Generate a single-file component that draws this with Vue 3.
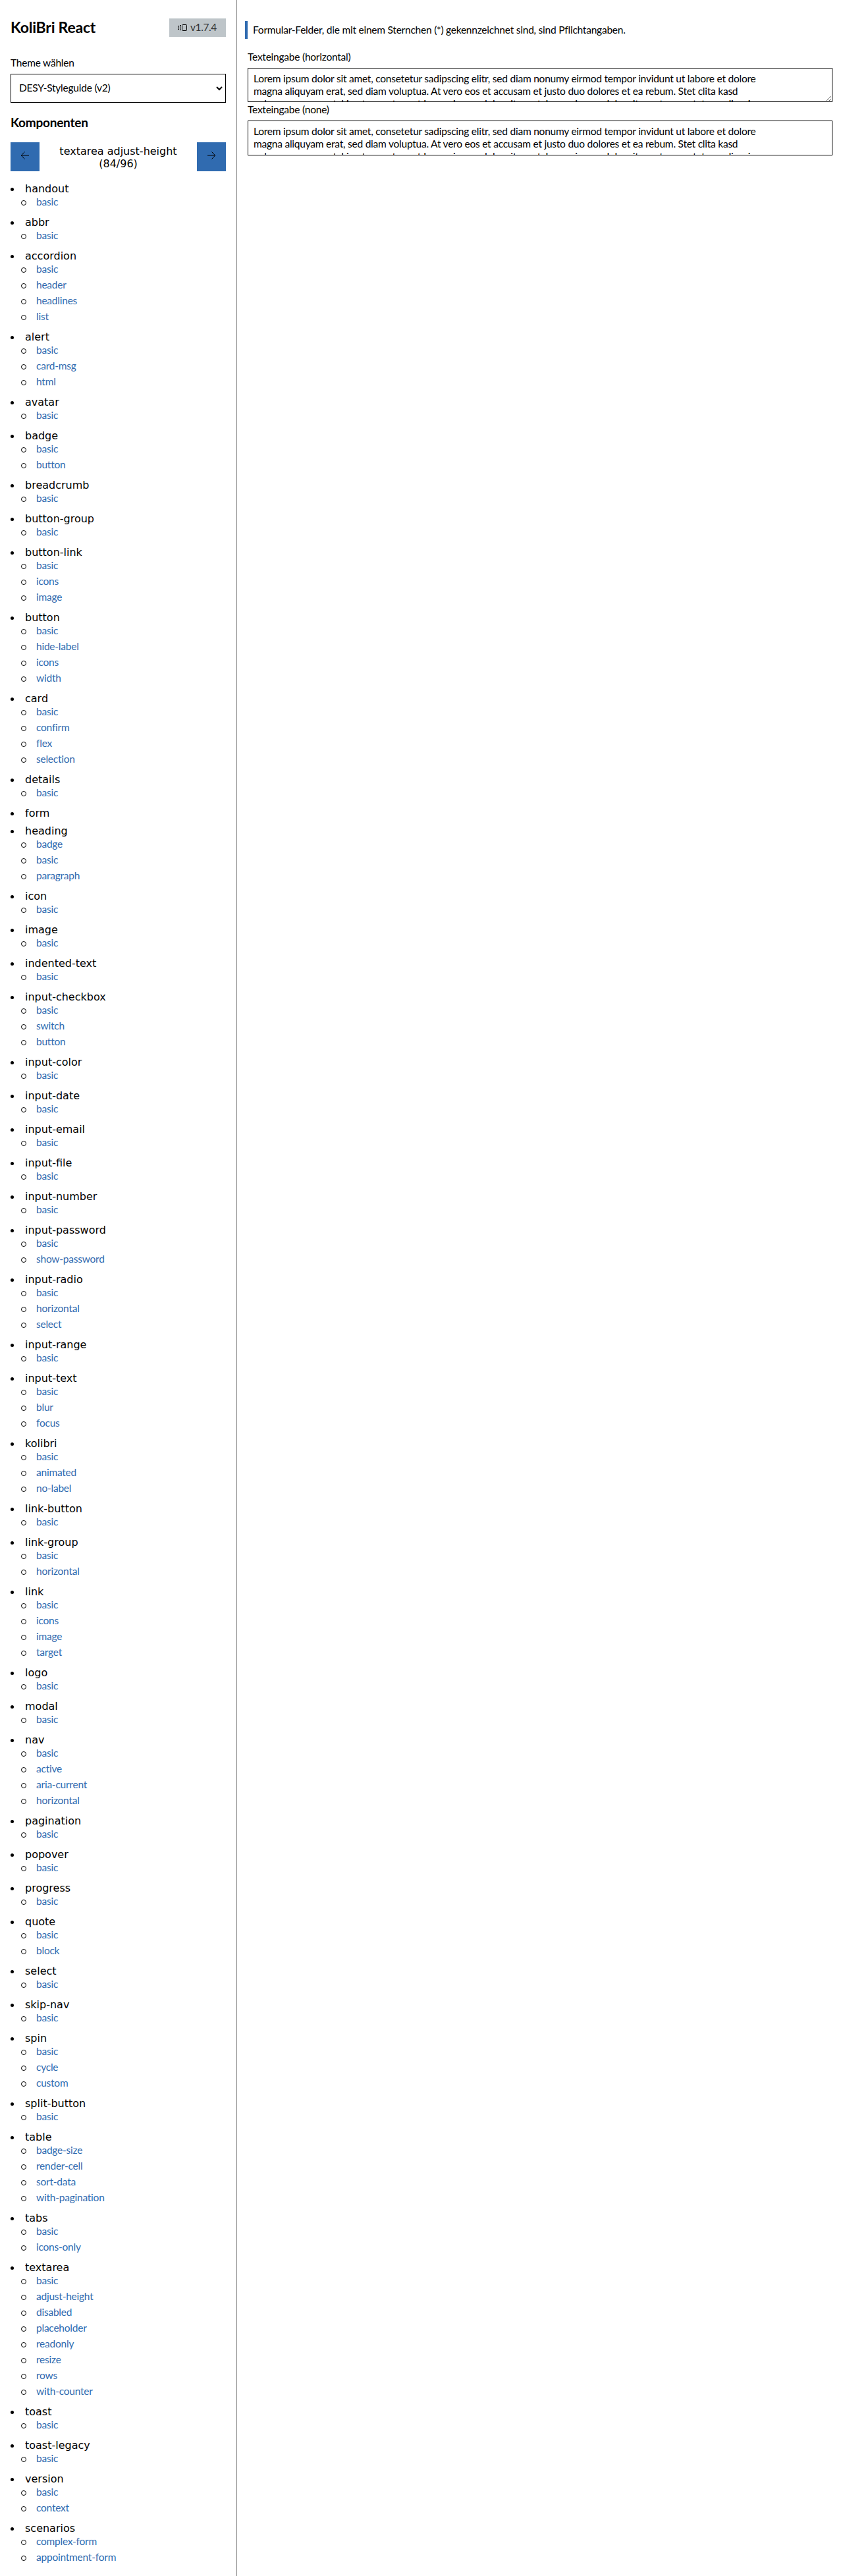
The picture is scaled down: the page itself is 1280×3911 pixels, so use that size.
<script setup>
const spec = `handout:basic
abbr:basic
accordion:basic,header,headlines,list
alert:basic,card-msg,html
avatar:basic
badge:basic,button
breadcrumb:basic
button-group:basic
button-link:basic,icons,image
button:basic,hide-label,icons,width
card:basic,confirm,flex,selection
details:basic
form:
heading:badge,basic,paragraph
icon:basic
image:basic
indented-text:basic
input-checkbox:basic,switch,button
input-color:basic
input-date:basic
input-email:basic
input-file:basic
input-number:basic
input-password:basic,show-password
input-radio:basic,horizontal,select
input-range:basic
input-text:basic,blur,focus
kolibri:basic,animated,no-label
link-button:basic
link-group:basic,horizontal
link:basic,icons,image,target
logo:basic
modal:basic
nav:basic,active,aria-current,horizontal
pagination:basic
popover:basic
progress:basic
quote:basic,block
select:basic
skip-nav:basic
spin:basic,cycle,custom
split-button:basic
table:badge-size,render-cell,sort-data,with-pagination
tabs:basic,icons-only
textarea:basic,adjust-height,disabled,placeholder,readonly,resize,rows,with-counter
toast:basic
toast-legacy:basic
version:basic,context
scenarios:complex-form,appointment-form`
const groups = spec.split('\n').map((line) => {
  const [name, items] = line.split(':')
  return { name, items: items ? items.split(',') : [] }
})
const lorem = `Lorem ipsum dolor sit amet, consetetur sadipscing elitr, sed diam nonumy eirmod tempor invidunt ut labore et dolore
magna aliquyam erat, sed diam voluptua. At vero eos et accusam et justo duo dolores et ea rebum. Stet clita kasd
gubergren, no sea takimata sanctus est Lorem ipsum dolor sit amet. Lorem ipsum dolor sit amet, consetetur sadipscing`
</script>

<template>
  <div class="layout">
    <aside class="sidebar">
      <header class="brand">
        <h1>KoliBri React</h1>
        <span class="version">
          <svg width="16" height="16" viewBox="0 0 16 16" fill="none" stroke="#000">
            <path d="M8.5 3.5h5a1 1 0 0 1 1 1v7a1 1 0 0 1-1 1h-5a1 1 0 0 1-1-1v-7a1 1 0 0 1 1-1zM6 4.5H4.5v7H6M3 5.5H1.5v5H3" />
          </svg>
          <span class="number">v1.7.4</span>
        </span>
      </header>
      <label class="label theme-label">Theme wählen</label>
      <div class="select">
        <span class="value">DESY-Styleguide (v2)</span>
        <svg width="10" height="8" viewBox="0 0 10 8" fill="none" stroke="#000" stroke-width="2"><path d="M1 2l4 4 4-4" /></svg>
      </div>
      <h2>Komponenten</h2>
      <div class="pager">
        <button aria-label="zurück">
          <svg width="16" height="16" viewBox="0 0 16 16" fill="none" stroke="#000"><path d="M7.5 2.5L2.3 8l5.2 5.5M2.3 8H14" /></svg>
        </button>
        <span class="current">textarea adjust-height<br />(84/96)</span>
        <button aria-label="weiter">
          <svg width="16" height="16" viewBox="0 0 16 16" fill="none" stroke="#000"><path d="M8.5 2.5L13.7 8l-5.2 5.5M13.7 8H2" /></svg>
        </button>
      </div>
      <ul class="groups">
        <li v-for="g in groups" :key="g.name">
          <div class="name">{{ g.name }}</div>
          <ul class="links">
            <li v-for="i in g.items" :key="i"><a>{{ i }}</a></li>
          </ul>
        </li>
      </ul>
    </aside>
    <main>
      <p class="hint">Formular-Felder, die mit einem Sternchen (*) gekennzeichnet sind, sind Pflichtangaben.</p>
      <label class="label">Texteingabe (horizontal)</label>
      <textarea class="horizontal" readonly :value="lorem"></textarea>
      <label class="label">Texteingabe (none)</label>
      <textarea class="none" readonly :value="lorem"></textarea>
    </main>
  </div>
</template>

<style>
body { margin: 0; background: #fff; }
</style>

<style scoped>
* { box-sizing: border-box; }
.layout {
  display: flex;
  height: 3911px;
  overflow: hidden;
  color: #000;
  font: 15.5px/18px Lato, sans-serif;
  letter-spacing: -0.23px;
}
.sidebar { width: 360px; flex: none; padding: 28px 16px 0; border-right: 1px solid #808080; }
.brand { display: flex; justify-content: space-between; height: 28px; }
h1 { margin: 0; font-size: 23px; line-height: 26px; font-weight: 700; white-space: nowrap; }
.version { display: flex; align-items: center; width: 86px; padding-left: 12px; gap: 4px; background: #bec5c9; color: #333; }
.number, .value { padding-bottom: 2px; }
.number { letter-spacing: -0.4px; }
.label { display: block; height: 20px; white-space: nowrap; }
.theme-label { margin-top: 30px; }
.select { display: flex; align-items: center; justify-content: space-between; height: 44px; margin-top: 6px; padding: 0 4px 0 12px; border: 1px solid #000; }
h2 { margin: 19px 0 0; height: 24px; font-size: 19px; line-height: 22px; font-weight: 700; }
.pager { display: flex; justify-content: space-between; margin-top: 17px; height: 44px; font: 16px/19px "DejaVu Sans", sans-serif; letter-spacing: 0; }
.pager button { display: flex; align-items: center; justify-content: center; width: 44px; height: 44px; padding: 0 0 5px; border: 0; background: #306bb0; }
.current { padding-top: 4px; text-align: center; white-space: nowrap; }
ul { margin: 0; padding: 0; list-style: none; }
.groups { margin-top: 17px; }
.groups > li { padding-bottom: 8px; }
.name { display: flex; align-items: center; height: 19px; font: 16px/19px "DejaVu Sans", sans-serif; letter-spacing: 0; }
.name::before { content: ""; width: 5px; height: 5px; margin: 2px 17px 0 0; border-radius: 50%; background: #000; }
.links li { display: flex; align-items: center; height: 24px; }
.links li::before { content: ""; width: 6px; height: 6px; margin: 0 15.5px 0 15.5px; border: 1px solid #000; border-radius: 50%; }
a { padding-bottom: 4px; color: #306bb0; }
main { flex: 1; padding: 32px 16px 0 12px; }
.hint { margin: 0 0 18px; height: 27px; padding-left: 8px; border-left: 4px solid #306bb0; line-height: 26px; }
main .label { margin-left: 4px; }
textarea {
  display: block;
  width: 888px;
  height: 52px;
  margin: 6px 0 2px 4px;
  padding: 6px 8px 0;
  border: 1px solid #000;
  border-radius: 0;
  outline: 0;
  overflow: hidden;
  background: #fff;
  color: #000;
  font: inherit;
  letter-spacing: inherit;
  line-height: 19px;
  white-space: pre;
}
.horizontal { resize: horizontal; }
.none { resize: none; height: 53px; }
</style>
